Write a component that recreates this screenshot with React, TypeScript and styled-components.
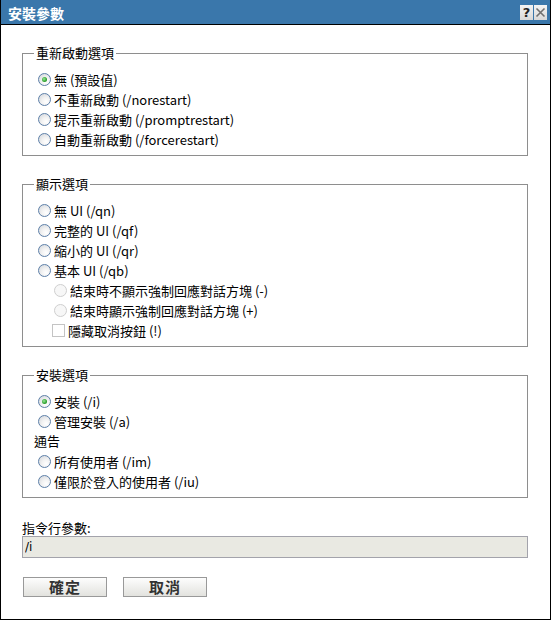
import styled, { createGlobalStyle } from "styled-components";

const GlobalStyle = createGlobalStyle`
  body {
    margin: 0;
    background: #fff;
    font-family: "Noto Sans CJK TC", "DejaVu Sans", sans-serif;
  }
`;

const Window = styled.div`
  width: 551px;
  height: 620px;
  box-sizing: border-box;
  border: 1px solid #000;
  border-top: none;
  background: #fff;
  display: flex;
  flex-direction: column;
`;

const TitleBar = styled.div`
  height: 24px;
  background: #3a77ab;
  border-bottom: 1px solid #000;
  display: flex;
  align-items: center;
  justify-content: space-between;
  padding: 0 3px 0 7px;
`;

const Title = styled.div`
  color: #fff;
  font-size: 14px;
  font-weight: bold;
  line-height: 16px;
  padding-top: 2px;
`;

const TitleButtons = styled.div`
  display: flex;
  gap: 1px;
  margin-top: 1px;
`;

const TitleButton = styled.div<{ $dim?: boolean }>`
  width: 13px;
  height: 15px;
  background: linear-gradient(#f4f4f4, #d8d8d8);
  display: flex;
  align-items: center;
  justify-content: center;
  color: ${({ $dim }) => ($dim ? "#7a7a7a" : "#222")};
  font-family: "DejaVu Sans", sans-serif;
  font-size: 13px;
  font-weight: bold;
  line-height: 15px;
`;

const Body = styled.div`
  padding: 20px 0 0 21px;
  display: flex;
  flex-direction: column;
  width: 506px;
`;

const Group = styled.fieldset`
  margin: 0 0 20px 0;
  width: 506px;
  box-sizing: border-box;
  border: 1px solid #8e8e8e;
  padding: 8px 10px 6px 14px;
  min-inline-size: auto;
`;

const Legend = styled.legend`
  padding: 0 2px;
  margin-left: -3px;
  font-size: 13px;
  line-height: 16px;
  color: #000;
`;

const Option = styled.label<{ $indent?: number }>`
  display: flex;
  align-items: center;
  gap: 3px;
  height: 20px;
  padding-left: ${({ $indent }) => $indent ?? 1}px;
  font-size: 13px;
  color: #000;
  white-space: nowrap;
`;

const Radio = styled.span<{ $checked?: boolean; $disabled?: boolean }>`
  position: relative;
  width: 13px;
  height: 13px;
  box-sizing: border-box;
  border-radius: 50%;
  flex-shrink: 0;
  border: 1px solid ${({ $disabled }) => ($disabled ? "#cfcfcf" : "#5d7fa8")};
  background: ${({ $disabled }) =>
    $disabled
      ? "#f7f7f7"
      : "radial-gradient(circle at 65% 70%, #ffffff 0%, #f2f2f2 40%, #cfd3d8 100%)"};

  &::after {
    content: "";
    display: ${({ $checked }) => ($checked ? "block" : "none")};
    position: absolute;
    left: 3px;
    top: 3px;
    width: 5px;
    height: 5px;
    border-radius: 50%;
    background: radial-gradient(circle at 40% 40%, #9be69b 0%, #2fa32f 60%, #1e7d1e 100%);
  }
`;

const Checkbox = styled.span`
  width: 13px;
  height: 13px;
  box-sizing: border-box;
  border: 1px solid #c4c4c4;
  background: #fff;
  flex-shrink: 0;
`;

const SubHeading = styled.div`
  margin-left: -3px;
  height: 20px;
  line-height: 20px;
  font-size: 13px;
  color: #000;
`;

const FieldLabel = styled.div`
  margin-top: 3px;
  margin-bottom: 1px;
  font-size: 13px;
  line-height: 14px;
  color: #000;
`;

const ArgsInput = styled.input`
  width: 506px;
  height: 22px;
  box-sizing: border-box;
  border: 1px solid #a3a3ab;
  background: #e9e9e2;
  padding: 0 0 0 2px;
  font-family: "DejaVu Sans", sans-serif;
  font-size: 12px;
  color: #000;
  outline: none;
`;

const ButtonRow = styled.div`
  display: flex;
  gap: 16px;
  margin-top: 19px;
  padding-left: 1px;
`;

const Button = styled.button`
  width: 84px;
  height: 20px;
  box-sizing: border-box;
  border: 1px solid #999;
  background: linear-gradient(#fdfdfd, #e2e2de);
  font-family: "Noto Sans CJK TC", sans-serif;
  font-size: 15px;
  font-weight: bold;
  line-height: 16px;
  color: #333;
  padding: 0;
  letter-spacing: 1px;
`;

interface Choice {
  label: string;
  checked?: boolean;
  disabled?: boolean;
  indent?: number;
  box?: boolean;
}

const restartChoices: Choice[] = [
  { label: "無 (預設值)", checked: true },
  { label: "不重新啟動 (/norestart)" },
  { label: "提示重新啟動 (/promptrestart)" },
  { label: "自動重新啟動 (/forcerestart)" },
];

const displayChoices: Choice[] = [
  { label: "無 UI (/qn)" },
  { label: "完整的 UI (/qf)" },
  { label: "縮小的 UI (/qr)" },
  { label: "基本 UI (/qb)" },
  { label: "結束時不顯示強制回應對話方塊 (-)", disabled: true, indent: 17 },
  { label: "結束時顯示強制回應對話方塊 (+)", disabled: true, indent: 17 },
  { label: "隱藏取消按鈕 (!)", box: true, indent: 15 },
];

function ChoiceRow({ choice }: { choice: Choice }) {
  return (
    <Option $indent={choice.indent}>
      {choice.box ? (
        <Checkbox />
      ) : (
        <Radio $checked={choice.checked} $disabled={choice.disabled} />
      )}
      {choice.label}
    </Option>
  );
}

export default function App() {
  return (
    <>
      <GlobalStyle />
      <Window>
        <TitleBar>
          <Title>安裝參數</Title>
          <TitleButtons>
            <TitleButton>?</TitleButton>
            <TitleButton $dim>
              <svg width="11" height="11" viewBox="0 0 11 11">
                <path d="M1.5 1.5 L9.5 9.5 M9.5 1.5 L1.5 9.5" stroke="#6f6f6f" strokeWidth="1.6" />
              </svg>
            </TitleButton>
          </TitleButtons>
        </TitleBar>
        <Body>
          <Group>
            <Legend>重新啟動選項</Legend>
            {restartChoices.map((c) => (
              <ChoiceRow key={c.label} choice={c} />
            ))}
          </Group>

          <Group>
            <Legend>顯示選項</Legend>
            {displayChoices.map((c) => (
              <ChoiceRow key={c.label} choice={c} />
            ))}
          </Group>

          <Group>
            <Legend>安裝選項</Legend>
            <ChoiceRow choice={{ label: "安裝 (/i)", checked: true }} />
            <ChoiceRow choice={{ label: "管理安裝 (/a)" }} />
            <SubHeading>通告</SubHeading>
            <ChoiceRow choice={{ label: "所有使用者 (/im)" }} />
            <ChoiceRow choice={{ label: "僅限於登入的使用者 (/iu)" }} />
          </Group>

          <FieldLabel>指令行參數:</FieldLabel>
          <ArgsInput value="/i" readOnly />

          <ButtonRow>
            <Button>確定</Button>
            <Button>取消</Button>
          </ButtonRow>
        </Body>
      </Window>
    </>
  );
}
